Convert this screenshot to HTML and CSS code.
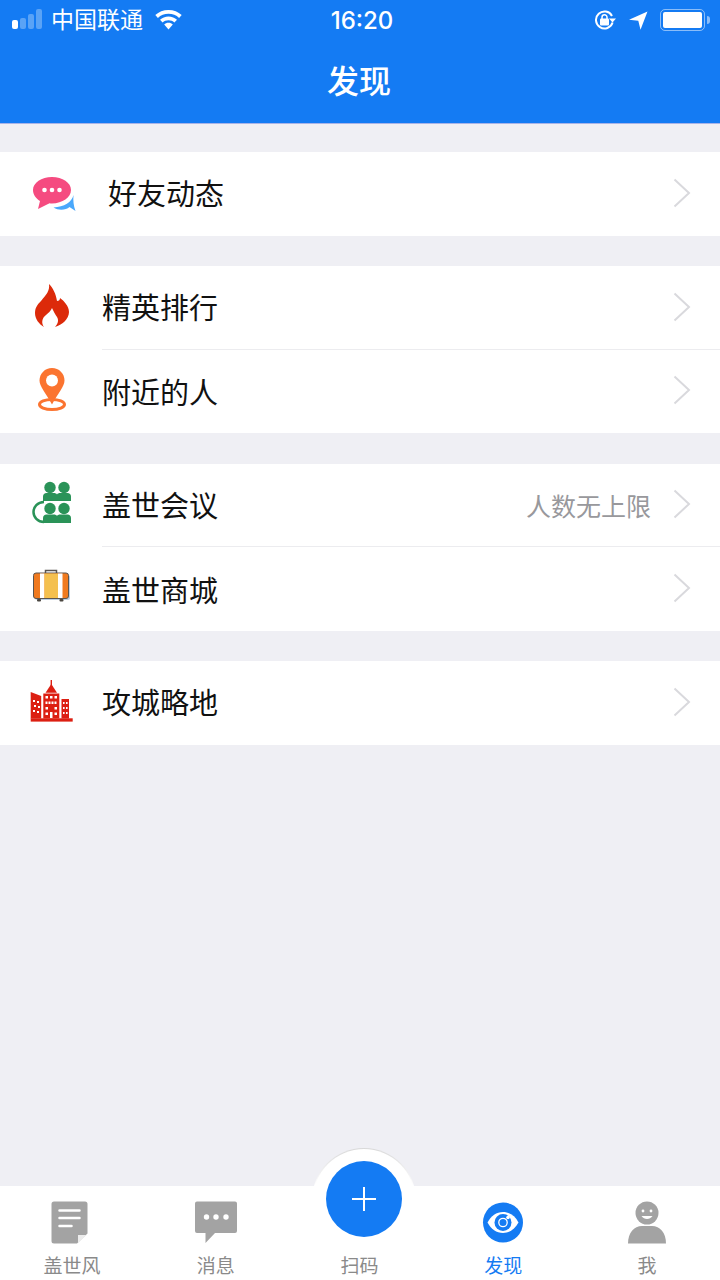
FILE: index.html
```html
<!DOCTYPE html>
<html lang="zh-CN">
<head>
    <meta charset="UTF-8">
    <meta name="viewport" content="width=device-width, initial-scale=1.0">
    <title>发现</title>
    <link rel="stylesheet" href="styles.css">
</head>
<body>

    <div class="page">
        <!-- 顶部导航 -->
        <header class="nav">
            <div class="status-bar">
                <div class="status-left">
                    <div class="signal">
                        <i class="bar bar-on"></i><i class="bar bar-2"></i><i class="bar bar-3"></i><i class="bar bar-4"></i>
                    </div>
                    <span class="carrier">中国联通</span>
                    <svg class="wifi" width="27" height="20" viewBox="0 0 27 20">
                        <path d="M13.5 0C8.3 0 3.8 1.9.3 5.1l2.6 2.8C5.7 5.300 9.400 3.800 13.500 3.800s7.800 1.500 10.600 4.100l2.600-2.800C23.200 1.900 18.700 0 13.500 0z" fill="#fff"/>
                        <path d="M13.500 6.400c-3.300 0-6.300 1.300-8.500 3.300l2.600 2.800c1.500-1.400 3.600-2.300 5.900-2.300s4.400.9 5.900 2.300L22 9.700c-2.200-2-5.200-3.300-8.500-3.300z" fill="#fff"/>
                        <path d="M13.500 12.800c-1.700 0-3.200.6-4.300 1.700l4.300 4.900 4.300-4.900c-1.100-1.100-2.600-1.700-4.300-1.700z" fill="#fff"/>
                    </svg>
                </div>
                <div class="time">16:20</div>
                <div class="status-right">
                    <svg class="rotation" width="23" height="20" viewBox="0 0 23 20">
                        <path d="M18.600 12.500A8.500 8.500 0 1 1 18 6" fill="none" stroke="#fff" stroke-width="2"/>
                        <path d="M15 8.500h7l-3.500 4z" fill="#fff"/>
                        <rect x="6" y="8.500" width="9" height="7" rx="1" fill="#fff"/>
                        <path d="M8 9V7.200a2.500 2.500 0 0 1 5 0V9" fill="none" stroke="#fff" stroke-width="1.500"/>
                    </svg>
                    <svg class="arrow" width="19" height="19" viewBox="0 0 19 19">
                        <path d="M18.500.5L0 8.800l9.300 .9 2.200 9z" fill="#fff"/>
                    </svg>
                    <div class="battery"><div class="battery-fill"></div></div>
                    <div class="battery-nub"></div>
                </div>
            </div>
            <h1 class="nav-title">发现</h1>
        </header>

        <!-- 列表 -->
        <main class="content">
            <section class="group">
                <div class="row">
                    <svg class="row-icon" width="46" height="44" viewBox="0 0 46 44">
                        <path d="M23.500 37.500C29 41 36 40 39.500 37L45.500 41C43.500 36 43 30 43.500 25C42 32 34 37 23.500 37.500z" fill="#4aa8fb"/>
                        <path d="M22 7C11.500 7 3 12.800 3 20c0 4.500 2.800 8.500 7 11L8 39l11.500-5.800c.8.1 1.700.2 2.500.2 10.500 0 19-6 19-13.400S32.500 7 22 7z" fill="#f54b80"/>
                        <circle cx="14.500" cy="20" r="2.300" fill="#fff"/>
                        <circle cx="22" cy="20" r="2.300" fill="#fff"/>
                        <circle cx="29.500" cy="20" r="2.300" fill="#fff"/>
                    </svg>
                    <span class="row-label row-label-first">好友动态</span>
                    <svg class="chevron" width="18" height="30" viewBox="0 0 18 30"><path d="M1.500 1.500L16 15 1.500 28.500" /></svg>
                </div>
            </section>

            <section class="group">
                <div class="row">
                    <svg class="row-icon" width="46" height="44" viewBox="0 0 46 44">
                        <path d="M19 0C20 7 16 11 11 17C7 21 5 24 5 29C5 35 9 40 14 43C11 39 12 34 16 31C18 29 21 27 22 24C24 28 25 30 27 33C29 36 28 40 25 43C32 41 39 35 39 28C39 22 34 17 30 14C30 16 29 17 27 17C26 10 23 4 19 0Z" fill="#dc2a0a"/>
                    </svg>
                    <span class="row-label">精英排行</span>
                    <svg class="chevron" width="18" height="30" viewBox="0 0 18 30"><path d="M1.500 1.500L16 15 1.500 28.500" /></svg>
                </div>
                <div class="row row-line">
                    <svg class="row-icon" width="46" height="44" viewBox="0 0 46 44">
                        <ellipse cx="22" cy="37.500" rx="12.500" ry="5" fill="none" stroke="#fb7430" stroke-width="3"/>
                        <path d="M22 1C15 1 9.500 6.500 9.500 13.500c0 6 6 12 12.500 24 6.500-12 12.500-18 12.500-24C34.500 6.500 29 1 22 1z" fill="#fb7430"/>
                        <circle cx="22" cy="13.500" r="6" fill="#fff"/>
                    </svg>
                    <span class="row-label">附近的人</span>
                    <svg class="chevron" width="18" height="30" viewBox="0 0 18 30"><path d="M1.500 1.500L16 15 1.500 28.500" /></svg>
                </div>
            </section>

            <section class="group">
                <div class="row">
                    <svg class="row-icon" width="46" height="44" viewBox="0 0 46 44">
                        <path d="M14 21C7.500 21 3.500 26 3.500 31S7.500 41 14 41" fill="none" stroke="#2a9358" stroke-width="2.500"/>
                        <g fill="#2a9358">
                            <circle cx="20" cy="6.500" r="5.700"/>
                            <circle cx="34" cy="6.500" r="5.700"/>
                            <path d="M13 20v-4.500c0-2 1.500-3.500 3.500-3.500h7c2 0 3 .5 3.500 1.500.5-1 1.500-1.500 3.500-1.500h7c2 0 3.500 1.500 3.500 3.500V20z"/>
                            <circle cx="20" cy="27.500" r="5.700"/>
                            <circle cx="34" cy="27.500" r="5.700"/>
                            <path d="M13 42v-5c0-2 1.500-3.500 3.500-3.500h7c2 0 3 .5 3.500 1.500.5-1 1.500-1.500 3.500-1.500h7c2 0 3.500 1.500 3.500 3.500v5z"/>
                        </g>
                    </svg>
                    <span class="row-label">盖世会议</span>
                    <span class="row-detail">人数无上限</span>
                    <svg class="chevron" width="18" height="30" viewBox="0 0 18 30"><path d="M1.500 1.500L16 15 1.500 28.500" /></svg>
                </div>
                <div class="row row-line">
                    <svg class="row-icon" width="46" height="44" viewBox="0 0 46 44">
                        <rect x="5" y="10" width="35" height="25" rx="2" fill="#bcd0e6"/>
                        <path d="M15.500 8V5.500h11V8" fill="none" stroke="#5a5550" stroke-width="1.500"/>
                        <rect x="3.500" y="8" width="35" height="25.500" rx="2.500" fill="#f07a1f" stroke="#5a5550" stroke-width="1"/>
                        <rect x="10" y="8.500" width="4.500" height="24.500" fill="#fff"/>
                        <rect x="14.500" y="8.500" width="13.500" height="24.500" fill="#f4c04f"/>
                        <rect x="28" y="8.500" width="4.500" height="24.500" fill="#fff"/>
                        <rect x="7" y="34" width="4" height="2.500" rx="1" fill="#4a4640"/>
                        <rect x="29.500" y="34" width="4" height="2.500" rx="1" fill="#4a4640"/>
                    </svg>
                    <span class="row-label">盖世商城</span>
                    <svg class="chevron" width="18" height="30" viewBox="0 0 18 30"><path d="M1.500 1.500L16 15 1.500 28.500" /></svg>
                </div>
            </section>

            <section class="group">
                <div class="row">
                    <svg class="row-icon" width="46" height="44" viewBox="0 0 46 44">
                        <g fill="#dc1f12">
                            <rect x="20.600" y="1" width="1.400" height="6"/>
                            <path d="M21.300 5L27 13.700H15.500z"/>
                            <rect x="13.300" y="14.500" width="16" height="25"/>
                            <path d="M.7 13l10.500 4v22.500H.7z"/>
                            <rect x="31.500" y="20" width="7.500" height="19.500"/>
                            <rect x=".7" y="39.300" width="42" height="3.300"/>
                        </g>
                        <g fill="#fff">
                            <rect x="15.500" y="17" width="2.500" height="2.500"/><rect x="20" y="17" width="2.500" height="2.500"/><rect x="24.500" y="17" width="2.500" height="2.500"/>
                            <rect x="15.500" y="22.500" width="2" height="2.500"/><rect x="18.500" y="22.500" width="2" height="2.500"/><rect x="21.500" y="22.500" width="2" height="2.500"/><rect x="24.500" y="22.500" width="2" height="2.500"/>
                            <rect x="15.500" y="28" width="2.500" height="2.500"/><rect x="24.500" y="28" width="2.500" height="2.500"/>
                            <rect x="15.500" y="33.500" width="2.500" height="2.500"/><rect x="20" y="33" width="2.500" height="6"/><rect x="24.500" y="33.500" width="2.500" height="2.500"/>
                            <rect x="3" y="21" width="2" height="2"/><rect x="7" y="22" width="2" height="2"/>
                            <rect x="4" y="26" width="2" height="2"/><rect x="8" y="27" width="2" height="2"/>
                            <rect x="3" y="31" width="2" height="2"/><rect x="7" y="32" width="2" height="2"/>
                            <rect x="33" y="23" width="1.600" height="2"/><rect x="36" y="23" width="1.600" height="2"/>
                            <rect x="33" y="28" width="1.600" height="2"/><rect x="36" y="28" width="1.600" height="2"/>
                            <rect x="33" y="33" width="1.600" height="2"/><rect x="36" y="33" width="1.600" height="2"/>
                        </g>
                    </svg>
                    <span class="row-label">攻城略地</span>
                    <svg class="chevron" width="18" height="30" viewBox="0 0 18 30"><path d="M1.500 1.500L16 15 1.500 28.500" /></svg>
                </div>
            </section>
        </main>

        <!-- 底部标签栏 -->
        <footer class="tabbar">
            <div class="fab"><div class="fab-inner">
                <svg width="26" height="26" viewBox="0 0 26 26"><path d="M13 1v24M1 13h24" stroke="#fff" stroke-width="2"/></svg>
            </div></div>

            <div class="tab">
                <svg class="tab-icon tab-icon-doc" width="37" height="43" viewBox="0 0 37 43">
                    <path d="M3 .5h31a2.500 2.500 0 0 1 2.500 2.500v29.500L26 42.500H3A2.500 2.500 0 0 1 .5 40V3A2.500 2.500 0 0 1 3 .5z" fill="#a3a3a3"/>
                    <path d="M27 42V34h8.500z" fill="#ececec"/>
                    <path d="M8.500 9.500h20M8.500 17h20M8.500 25h12" stroke="#fff" stroke-width="2.500" stroke-linecap="round"/>
                </svg>
                <span class="tab-label">盖世风</span>
            </div>
            <div class="tab">
                <svg class="tab-icon" width="42" height="43" viewBox="0 0 42 43">
                    <path d="M2 .5h38A2 2 0 0 1 42 2.500V30a2 2 0 0 1-2 2H20L10.500 42V32H2a2 2 0 0 1-2-2V2.500A2 2 0 0 1 2 .5z" fill="#a3a3a3"/>
                    <circle cx="11.500" cy="16" r="2.700" fill="#fff"/>
                    <circle cx="21" cy="16" r="2.700" fill="#fff"/>
                    <circle cx="31" cy="16" r="2.700" fill="#fff"/>
                </svg>
                <span class="tab-label">消息</span>
            </div>
            <div class="tab">
                <div class="tab-spacer"></div>
                <span class="tab-label">扫码</span>
            </div>
            <div class="tab tab-active">
                <svg class="tab-icon" width="42" height="43" viewBox="0 0 42 43">
                    <circle cx="21" cy="21.500" r="20" fill="#147bf3"/>
                    <path d="M5.500 21.500C9 15 14.500 11 21 11S33 15 36.500 21.500C33 28 27.500 32 21 32S9 28 5.500 21.500z" fill="#fff"/>
                    <circle cx="21" cy="21.500" r="8.500" fill="#147bf3"/>
                    <circle cx="21" cy="21.500" r="4.200" fill="none" stroke="#fff" stroke-width="1.300"/>
                    <circle cx="26" cy="16.500" r="1.800" fill="#fff"/>
                </svg>
                <span class="tab-label">发现</span>
            </div>
            <div class="tab">
                <svg class="tab-icon" width="38" height="43" viewBox="0 0 38 43">
                    <circle cx="19" cy="12" r="11.500" fill="#a3a3a3"/>
                    <circle cx="15" cy="10" r="1.400" fill="#fff"/>
                    <circle cx="23" cy="10" r="1.400" fill="#fff"/>
                    <path d="M13.500 15c2.500 4 8.500 4 11 0z" fill="#fff"/>
                    <path d="M0 42.500C0 32 6 25 14 25h10c8 0 14 7 14 17.500z" fill="#a3a3a3"/>
                </svg>
                <span class="tab-label">我</span>
            </div>
        </footer>
    </div>

</body>
</html>
```

FILE: styles.css
```css
body {
    margin: 0;
    font-family: "Noto Sans CJK SC", "Noto Sans", sans-serif;
    background-color: #efeff4;
    color: #111;
}

.page {
    width: 720px;
    height: 1280px;
    display: flex;
    flex-direction: column;
    overflow: hidden;
}

/* nav */
.nav {
    height: 123px;
    background-color: #147bf3;
    color: #fff;
    border-bottom: 1px solid #a9b4e8;
}

.status-bar {
    height: 40px;
    display: flex;
    align-items: center;
    padding: 0 10px 0 12px;
}

.status-left,
.status-right {
    flex: 1;
    display: flex;
    align-items: center;
}

.status-right {
    justify-content: flex-end;
}

.signal {
    display: flex;
    align-items: flex-end;
    gap: 2px;
    height: 20px;
    margin-bottom: 2px;
}

.bar {
    display: block;
    width: 6px;
    border-radius: 2px;
    background-color: rgba(255, 255, 255, 0.3);
}

.bar-on {
    height: 9px;
    background-color: #fff;
}

.bar-2 {
    height: 11px;
}

.bar-3 {
    height: 15px;
}

.bar-4 {
    height: 20px;
}

.carrier {
    font-size: 23px;
    line-height: 36px;
    padding-bottom: 4px;
    margin-left: 9px;
}

.wifi {
    margin-left: 12px;
}

.time {
    font-family: Inter, "Liberation Sans", sans-serif;
    font-size: 24px;
    font-weight: 500;
    padding-left: 2px;
}

.arrow {
    margin-left: 12px;
}

.battery {
    width: 45px;
    height: 22px;
    margin-left: 12px;
    padding: 2px;
    box-sizing: border-box;
    border: 1px solid rgba(255, 255, 255, 0.5);
    border-radius: 5px;
}

.battery-fill {
    height: 100%;
    background-color: #fff;
    border-radius: 2px;
}

.battery-nub {
    width: 3px;
    height: 8px;
    margin-left: 2px;
    background-color: rgba(255, 255, 255, 0.5);
    border-radius: 0 3px 3px 0;
}

.nav-title {
    margin: 0;
    height: 83px;
    line-height: 78px;
    padding-right: 2px;
    text-align: center;
    font-size: 32px;
    font-weight: 500;
}

/* list */
.content {
    flex: 1;
    padding-top: 28px;
    display: flex;
    flex-direction: column;
    gap: 30.5px;
}

.group {
    background-color: #fff;
}

.row {
    height: 83.5px;
    display: flex;
    align-items: center;
    padding-left: 30px;
    padding-right: 29px;
    position: relative;
}

.row-line::before {
    content: "";
    position: absolute;
    left: 102px;
    right: 0;
    top: -1px;
    height: 1px;
    background-color: #ececef;
}

.row-icon {
    margin-bottom: 4px;
    flex-shrink: 0;
}

.row-label {
    flex: 1;
    margin-left: 26px;
    font-size: 29px;
    line-height: 40px;
    padding-bottom: 3px;
}

.row-line .row-label {
    padding-bottom: 0;
}

.row-label-first {
    margin-left: 32px;
}

.row-detail {
    font-size: 25px;
    color: #98989c;
    margin-right: 22px;
    padding-bottom: 1px;
}

.chevron {
    fill: none;
    stroke: #d9d9dd;
    stroke-width: 2;
    margin-bottom: 2px;
}

/* tabs */
.tabbar {
    height: 94px;
    background-color: #fff;
    display: flex;
    position: relative;
    padding-right: 1px;
}

.tab {
    flex: 1;
    display: flex;
    flex-direction: column;
    align-items: center;
    padding-top: 15px;
    color: #8a8a8a;
}

.tab-icon,
.tab-spacer {
    display: block;
    height: 43px;
}

.tab-icon-doc {
    margin-right: 4px;
}

.tab-label {
    font-size: 19px;
    line-height: 24px;
    margin-top: 9px;
}

.tab-active {
    color: #147bf3;
}

.fab {
    position: absolute;
    left: 312px;
    top: -38px;
    width: 104px;
    height: 104px;
    box-sizing: border-box;
    border-radius: 50%;
    border: 1px solid transparent;
    background: linear-gradient(#fff, #fff) padding-box, linear-gradient(#d8d8d8, #fff 36%) border-box;
    padding: 12px;
}

.fab-inner {
    width: 76px;
    height: 76px;
    margin: 0 auto;
    border-radius: 50%;
    background-color: #147bf3;
    display: flex;
    align-items: center;
    justify-content: center;
}
```
